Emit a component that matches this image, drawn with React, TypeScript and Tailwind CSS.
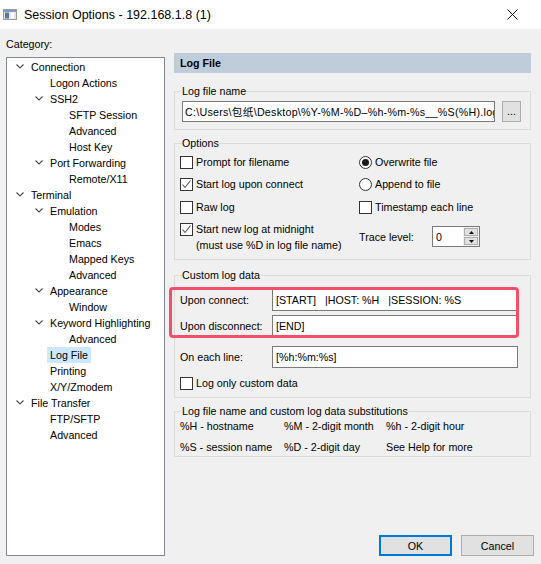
import React from 'react'

type Node = { label: string; level: 0 | 1 | 2; open?: boolean; selected?: boolean }

const TREE: Node[] = [
  { label: 'Connection', level: 0, open: true },
  { label: 'Logon Actions', level: 1 },
  { label: 'SSH2', level: 1, open: true },
  { label: 'SFTP Session', level: 2 },
  { label: 'Advanced', level: 2 },
  { label: 'Host Key', level: 2 },
  { label: 'Port Forwarding', level: 1, open: true },
  { label: 'Remote/X11', level: 2 },
  { label: 'Terminal', level: 0, open: true },
  { label: 'Emulation', level: 1, open: true },
  { label: 'Modes', level: 2 },
  { label: 'Emacs', level: 2 },
  { label: 'Mapped Keys', level: 2 },
  { label: 'Advanced', level: 2 },
  { label: 'Appearance', level: 1, open: true },
  { label: 'Window', level: 2 },
  { label: 'Keyword Highlighting', level: 1, open: true },
  { label: 'Advanced', level: 2 },
  { label: 'Log File', level: 1, selected: true },
  { label: 'Printing', level: 1 },
  { label: 'X/Y/Zmodem', level: 1 },
  { label: 'File Transfer', level: 0, open: true },
  { label: 'FTP/SFTP', level: 1 },
  { label: 'Advanced', level: 1 },
]

const INDENT = ['w-[9px]', 'w-[28px]', 'w-[47px]']

function Chevron() {
  return (
    <svg width="8" height="5" viewBox="0 0 8 5" className="-mt-[2px]">
      <polyline points="0.5,0.5 4,4 7.5,0.5" fill="none" stroke="#4a4a4a" strokeWidth="1.1" />
    </svg>
  )
}

function Check({ checked }: { checked?: boolean }) {
  return (
    <span className="w-[13px] h-[13px] border border-[#333333] bg-white flex items-center justify-center shrink-0">
      {checked && (
        <svg width="11" height="11" viewBox="0 0 11 11">
          <polyline points="1.5,5.5 4,8.5 9.5,1.5" fill="none" stroke="#555555" strokeWidth="1.1" />
        </svg>
      )}
    </span>
  )
}

function Radio({ on }: { on?: boolean }) {
  return (
    <span className="w-[13px] h-[13px] rounded-full border border-[#333333] bg-white flex items-center justify-center shrink-0">
      {on && <span className="w-[7px] h-[7px] rounded-full bg-[#1a1a1a]" />}
    </span>
  )
}

function CheckRow({ checked, children }: { checked?: boolean; children: React.ReactNode }) {
  return (
    <div className="flex items-start gap-[3px]">
      <div className="h-[16px] flex items-center">
        <Check checked={checked} />
      </div>
      <div className="leading-[16px]">{children}</div>
    </div>
  )
}

function RadioRow({ on, children }: { on?: boolean; children: React.ReactNode }) {
  return (
    <div className="flex items-center gap-[3px] h-[16px]">
      <Radio on={on} />
      <span>{children}</span>
    </div>
  )
}

function Field({ children }: { children: React.ReactNode }) {
  return (
    <div className="w-[246px] h-[22px] bg-white border border-[#7a7a7a] flex items-center px-[3px] whitespace-pre overflow-hidden">
      {children}
    </div>
  )
}

export default function App() {
  return (
    <div className="w-[541px] h-[564px] flex flex-col bg-[#f0f0f0] text-black text-[10.7px] leading-[16px] font-['Liberation_Sans','Noto_Sans_CJK_SC',sans-serif] overflow-hidden">
      {/* title bar */}
      <div className="h-[29px] bg-white flex items-center shrink-0">
        <svg width="14" height="11" viewBox="0 0 14 11" className="ml-[3px] -mt-[1px]">
          <rect x="0.5" y="0.5" width="13" height="10" fill="#e6e6e6" stroke="#9a9a9a" />
          <rect x="1" y="1" width="12" height="2" fill="#7f9cc0" />
          <rect x="2" y="3.5" width="4" height="6" fill="#58779c" />
          <rect x="8" y="3.5" width="3" height="6" fill="#ffffff" />
        </svg>
        <span className="ml-[7px] text-[12.5px] font-['Liberation_Sans',sans-serif]">Session Options - 192.168.1.8 (1)</span>
        <svg width="11" height="11" viewBox="0 0 11 11" className="ml-auto mr-[23px]">
          <path d="M0.5 0.5 L10.5 10.5 M10.5 0.5 L0.5 10.5" stroke="#111111" strokeWidth="1" />
        </svg>
      </div>

      <div className="flex-1 flex min-h-0">
        {/* category tree */}
        <div className="w-[165px] pl-[6px] pt-[7px] pb-[8px] flex flex-col shrink-0">
          <div>Category:</div>
          <div className="mt-[5px] flex-1 bg-white border border-[#828790] pt-[1px]">
            {TREE.map((n, i) => (
              <div key={i} className="h-[16px] flex items-center whitespace-nowrap">
                <span className={INDENT[n.level] + ' shrink-0'} />
                <span className="w-[15px] shrink-0 flex items-center">{n.open && <Chevron />}</span>
                {n.selected ? (
                  <span className="-ml-[3px] px-[3px] bg-[#cce8ff]">{n.label}</span>
                ) : (
                  <span>{n.label}</span>
                )}
              </div>
            ))}
          </div>
        </div>

        {/* right panel */}
        <div className="ml-[9px] w-[357px] pt-[24px] flex flex-col">
          <div className="h-[20px] bg-[#bfcddb] flex items-center pl-[6px] font-bold">Log File</div>

          {/* log file name */}
          <fieldset className="mt-[10px] border border-[#dcdcdc] px-[5px] pt-[2px] pb-[7px]">
            <legend className="ml-[2px]">Log file name</legend>
            <div className="flex items-center ml-[2px]">
              <div className="w-[313px] h-[21px] bg-white border border-[#7a7a7a] flex items-center px-[2px] whitespace-nowrap overflow-hidden tracking-[0.25px]">
                C:\Users\包纸\Desktop\%Y-%M-%D–%h-%m-%s__%S(%H).log
              </div>
              <div className="ml-[7px] w-[19px] h-[21px] bg-[#e1e1e1] border border-[#adadad] flex items-center justify-center pb-[2px]">
                ...
              </div>
            </div>
          </fieldset>

          {/* options */}
          <fieldset className="mt-[5px] border border-[#dcdcdc] px-[5px] pt-[3px] pb-[6px]">
            <legend className="ml-[2px]">Options</legend>
            <div className="flex">
              <div className="w-[179px] flex flex-col">
                <CheckRow>Prompt for filename</CheckRow>
                <div className="mt-[6px]">
                  <CheckRow checked>Start log upon connect</CheckRow>
                </div>
                <div className="mt-[7px]">
                  <CheckRow>Raw log</CheckRow>
                </div>
                <div className="mt-[6px]">
                  <CheckRow checked>
                    Start new log at midnight
                    <br />
                    (must use %D in log file name)
                  </CheckRow>
                </div>
              </div>
              <div className="flex flex-col">
                <RadioRow on>Overwrite file</RadioRow>
                <div className="mt-[6px]">
                  <RadioRow>Append to file</RadioRow>
                </div>
                <div className="mt-[7px]">
                  <CheckRow>Timestamp each line</CheckRow>
                </div>
                <div className="mt-[11px] flex items-center">
                  <span className="w-[73px] pt-[1px]">Trace level:</span>
                  <div className="flex h-[21px] border border-[#7a7a7a] bg-white">
                    <div className="w-[30px] pl-[3px] flex items-center">0</div>
                    <div className="w-[16px] flex flex-col gap-[1px] bg-[#f0f0f0] p-[1px]">
                      <div className="flex-1 bg-[#e1e1e1] border border-[#adadad] flex items-center justify-center">
                        <svg width="5" height="3" viewBox="0 0 5 3">
                          <polygon points="2.5,0 5,3 0,3" fill="#111111" />
                        </svg>
                      </div>
                      <div className="flex-1 bg-[#e1e1e1] border border-[#adadad] flex items-center justify-center">
                        <svg width="5" height="3" viewBox="0 0 5 3">
                          <polygon points="0,0 5,0 2.5,3" fill="#111111" />
                        </svg>
                      </div>
                    </div>
                  </div>
                </div>
              </div>
            </div>
          </fieldset>

          {/* custom log data */}
          <fieldset className="relative mt-[7px] border border-[#dcdcdc] px-[5px] pt-[6px] pb-[6px]">
            <legend className="ml-[2px]">Custom log data</legend>
            <div className="flex items-center">
              <span className="w-[92px]">Upon connect:</span>
              <Field>[START]   |HOST: %H   |SESSION: %S</Field>
            </div>
            <div className="mt-[4px] flex items-center">
              <span className="w-[92px]">Upon disconnect:</span>
              <Field>[END]</Field>
            </div>
            <div className="mt-[9px] flex items-center">
              <span className="w-[92px]">On each line:</span>
              <Field>[%h:%m:%s]</Field>
            </div>
            <div className="mt-[7px]">
              <CheckRow>Log only custom data</CheckRow>
            </div>
            <div className="absolute left-[-6px] top-[4px] w-[350px] h-[51px] border-[3px] border-[#f2506a] rounded-[4px] pointer-events-none" />
          </fieldset>

          {/* substitutions */}
          <fieldset className="mt-[5px] border border-[#dcdcdc] px-[5px] pb-[1px]">
            <legend className="ml-[2px]">Log file name and custom log data substitutions</legend>
            <div className="-mt-[1px] grid grid-cols-[104px_102px_1fr] gap-y-[5px]">
              <span>%H - hostname</span>
              <span>%M - 2-digit month</span>
              <span>%h - 2-digit hour</span>
              <span>%S - session name</span>
              <span>%D - 2-digit day</span>
              <span>See Help for more</span>
            </div>
          </fieldset>

          {/* buttons */}
          <div className="mt-auto mb-[8px] -mr-[3px] flex justify-end gap-[9px]">
            <button className="w-[73px] h-[21px] bg-[#e1e1e1] border-2 border-[#0078d7] flex items-center justify-center">
              OK
            </button>
            <button className="w-[73px] h-[21px] bg-[#e1e1e1] border border-[#adadad] flex items-center justify-center">
              Cancel
            </button>
          </div>
        </div>
      </div>
    </div>
  )
}
